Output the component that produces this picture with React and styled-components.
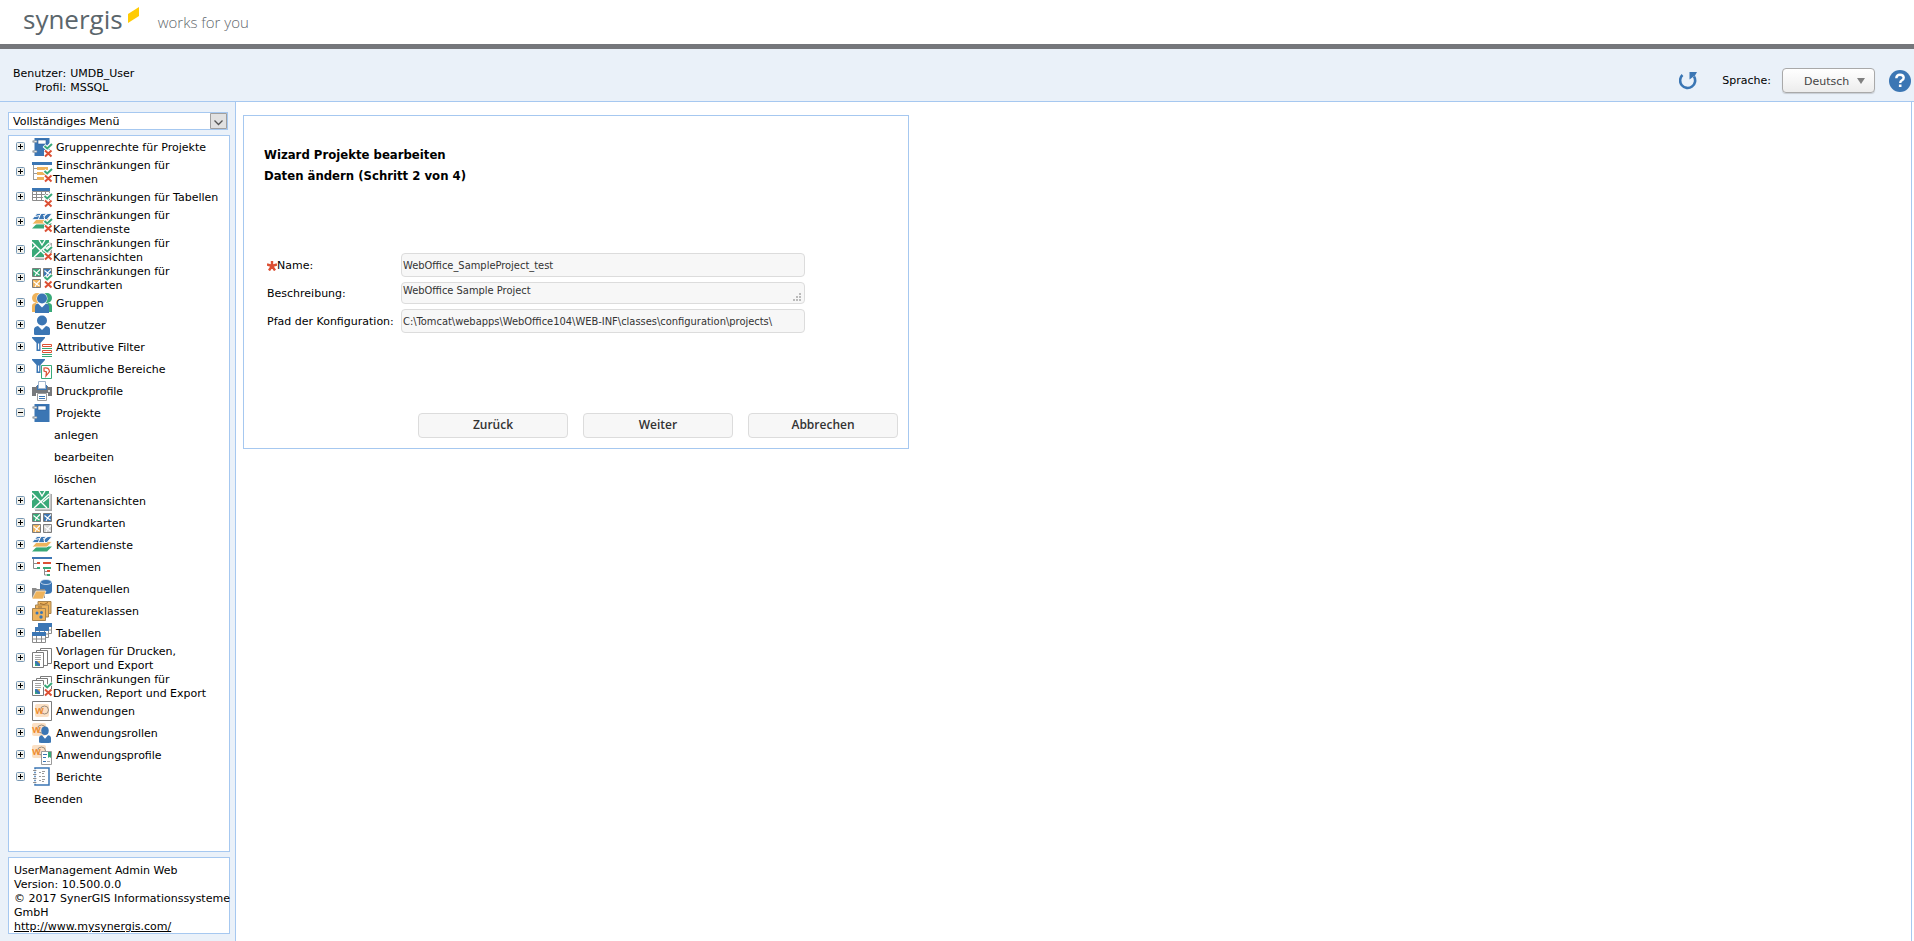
import React, { useState } from 'react';
import styled, { createGlobalStyle } from 'styled-components';

const COLORS = {
  LINE: '#a6c8f0',
  PANEL: '#eaf1f9',
  BAR: '#75777b',
  BLUE: '#3b76b4',
  GREEN: '#38a978',
  ORANGE: '#eeb35c',
  RED: '#dc5034',
  GREY: '#7b7b7b',
  FIELD: '#f7f7f7',
  FIELD_LINE: '#dcdcdc'
};

const FONT = '"DejaVu Sans", Verdana, sans-serif';
const FONT_NARROW = '"DejaVu Sans Condensed", "DejaVu Sans", sans-serif';
const FONT_HUMANIST = '"Open Sans", "Noto Sans", sans-serif';

const GlobalStyle = createGlobalStyle`
  * {
    box-sizing: border-box;
  }
  body {
    margin: 0;
    background: #fff;
    color: #000;
    font-family: ${FONT};
    font-size: 11px;
    line-height: 14px;
  }
`;

const Page = styled.div`
  display: flex;
  flex-direction: column;
  min-height: 100vh;
`;

const Brand = styled.header`
  display: flex;
  align-items: flex-start;
  height: 49px;
  padding-left: 23px;
  border-bottom: 5px solid ${COLORS.BAR};
`;

const BrandName = styled.span`
  font-family: ${FONT_HUMANIST};
  font-size: 26px;
  line-height: 38px;
  color: #5b666c;
`;

const BrandMark = styled.svg`
  width: 12px;
  height: 17px;
  margin: 7px 18px 0 5px;
`;

const Slogan = styled.span`
  font-family: ${FONT_HUMANIST};
  font-size: 15px;
  font-weight: 300;
  line-height: 45px;
  color: #5f686d;
`;

const Toolbar = styled.div`
  display: flex;
  align-items: center;
  justify-content: space-between;
  height: 53px;
  padding: 15px 3px 4px 13px;
  background: ${COLORS.PANEL};
  border-bottom: 1px solid ${COLORS.LINE};
`;

const Session = styled.dl`
  display: grid;
  grid-template-columns: max-content max-content;
  column-gap: 4px;
  margin: 0;

  dt {
    text-align: right;
  }
  dd {
    margin: 0;
  }
`;

const Tools = styled.div`
  display: flex;
  align-items: center;
`;

const IconButton = styled.button`
  display: block;
  padding: 0;
  border: 0;
  background: none;
  cursor: pointer;

  svg {
    display: block;
  }
`;

const LanguageLabel = styled.label`
  margin: 0 11px 0 24px;
`;

const LanguageBox = styled.span`
  position: relative;
  display: block;
  margin-right: 14px;

  svg {
    position: absolute;
    top: 10px;
    right: 10px;
    pointer-events: none;
  }
`;

const LanguageSelect = styled.select`
  display: block;
  width: 93px;
  height: 25px;
  padding: 1px 16px 0 21px;
  appearance: none;
  border: 1px solid #a9a9a9;
  border-radius: 4px;
  background: linear-gradient(#fff, #f6f6f6 50%, #ececec);
  box-shadow: 0 1px 1px rgba(0, 0, 0, 0.15);
  font-family: ${FONT};
  font-size: 11px;
  color: #444;
`;

const Body = styled.div`
  display: flex;
  flex: 1;
`;

const Sidebar = styled.aside`
  display: flex;
  flex-direction: column;
  flex: none;
  width: 236px;
  padding: 10px 5px 7px 8px;
  background: ${COLORS.PANEL};
  border-right: 1px solid ${COLORS.LINE};
`;

const MenuBox = styled.div`
  position: relative;
  margin: 0 2px 5px 0;

  svg {
    position: absolute;
    top: 1px;
    right: 1px;
    pointer-events: none;
  }
`;

const MenuSelect = styled.select`
  display: block;
  width: 100%;
  height: 18px;
  padding: 0 20px 0 4px;
  appearance: none;
  border: 1px solid ${COLORS.LINE};
  border-radius: 0;
  background: #fff;
  font-family: ${FONT};
  font-size: 11px;
  color: #000;
`;

const Tree = styled.ul`
  flex: 1;
  margin: 0 0 5px;
  padding: 0;
  list-style: none;
  background: #fff;
  border: 1px solid ${COLORS.LINE};
`;

const Row = styled.li`
  display: flex;
  align-items: center;
  min-height: 22px;
  padding-left: ${({ $indent }) => $indent || 7}px;

  a {
    margin: 1px 0 -1px;
    color: inherit;
    text-decoration: none;
  }
`;

const Toggle = styled(IconButton)`
  flex: none;
  margin-right: 7px;
`;

const RowIcon = styled.svg`
  flex: none;
  width: 20px;
  height: 20px;
  margin-right: 1px;
  overflow: visible;
`;

const RowLink = styled.a`
  text-indent: 3px;
  white-space: pre-line;
`;

const About = styled.footer`
  height: 77px;
  padding: 6px 0 0 5px;
  background: #fff;
  border: 1px solid ${COLORS.LINE};
  white-space: nowrap;

  a {
    color: inherit;
  }
`;

const Content = styled.main`
  flex: 1;
  min-width: 0;
  margin-right: 2px;
  padding: 13px 7px;
  border-right: 1px solid ${COLORS.LINE};
`;

const Wizard = styled.form`
  width: 666px;
  max-width: 100%;
  padding: 28px 10px 10px 20px;
  border: 1px solid ${COLORS.LINE};
`;

const Title = styled.h1`
  margin: 0;
  font-family: ${FONT_NARROW};
  font-size: 13px;
  font-weight: bold;
  line-height: 21px;
`;

const Fields = styled.div`
  display: grid;
  grid-template-columns: 134px minmax(0, 404px);
  row-gap: 5px;
  align-items: center;
  margin: 67px 0 80px 3px;
`;

const FieldLabel = styled.label`
  display: flex;
  align-items: center;
  padding-top: 2px;
`;

const Input = styled.input`
  width: 100%;
  height: 24px;
  padding: 0 1px;
  border: 1px solid ${COLORS.FIELD_LINE};
  border-radius: 4px;
  background: ${COLORS.FIELD};
  font-family: ${FONT_NARROW};
  font-size: 11px;
  color: #333;
`;

const AreaBox = styled.div`
  position: relative;

  svg {
    position: absolute;
    right: 4px;
    bottom: 3px;
    pointer-events: none;
  }
`;

const Area = styled.textarea`
  display: block;
  width: 100%;
  height: 22px;
  padding: 1px;
  border: 1px solid ${COLORS.FIELD_LINE};
  border-radius: 4px;
  background: ${COLORS.FIELD};
  font-family: ${FONT_NARROW};
  font-size: 11px;
  line-height: 14px;
  color: #333;
  resize: none;
  overflow: hidden;
`;

const Actions = styled.div`
  display: flex;
  justify-content: flex-end;
  gap: 15px;
`;

const Button = styled.button`
  width: 150px;
  height: 25px;
  padding: 0 0 2px;
  border: 1px solid ${COLORS.FIELD_LINE};
  border-radius: 4px;
  background: ${COLORS.FIELD};
  font-family: ${FONT_HUMANIST};
  font-size: 12px;
  font-weight: 600;
  color: #333;
  cursor: pointer;
`;

const Limits = () => (
  <>
    <path d="M12 8.5l3 3 5-5" fill="none" stroke="#fff" strokeWidth="4" />
    <path d="M12 13h8v7h-8z" fill="#fff" />
    <path d="M12.500 9l2.700 2.500L20 7" fill="none" stroke={COLORS.GREEN} strokeWidth="2" />
    <path d="M13 13.500l6.500 6M19.500 13.500l-6.500 6" stroke={COLORS.RED} strokeWidth="2" />
  </>
);

const Book = () => (
  <>
    <path d="M2.500 1h15v18h-15z" fill={COLORS.BLUE} />
    <path d="M6 3h8v4H6z" fill="#fff" stroke="#2c5f98" strokeWidth="0.6" />
    <path d="M1.500 4.500h2.500M1.500 14.500h2.500" stroke="#9aa3ab" strokeWidth="2.500" strokeLinecap="round" />
    <path d="M2.500 4.500h2M2.500 14.500h2" stroke="#e5e8ea" strokeWidth="1" />
  </>
);

const Layers = () => (
  <>
    <path d="M5 11.500h15l-5 5H0z" fill={COLORS.GREEN} />
    <path d="M5 6.500h15l-5 5.500H0z" fill={COLORS.ORANGE} stroke="#fff" strokeWidth="0.800" />
    <path d="M5 1.500h15l-5 6H0z" fill={COLORS.BLUE} stroke="#fff" strokeWidth="0.800" />
    <path d="M9.500 1L8 3.500 6 8M15 1l-3 4 1 3M3 4.500l5-1M11 4l6-3" fill="none" stroke="#fff" />
  </>
);

const MapView = () => (
  <>
    <path d="M3 3h17v17H3z" fill="#a8a8a8" />
    <path d="M2 2h16.500v16.500H2z" fill="#e4e4e4" />
    <path d="M0 0h17v17H0z" fill={COLORS.GREEN} />
    <path d="M0 2l15 15M2 17L17 3M7 0l3 5 3-5M11 11l6-5M4 5L0 9" fill="none" stroke="#fff" strokeWidth="1.400" />
  </>
);

const MapTile = ({ x, y, color }) => (
  <g transform={`translate(${x} ${y})`}>
    <path d="M.5.5h8v8h-8z" fill={color} stroke={COLORS.GREY} />
    <path d="M1.500 2.500l3 2.500L8 1.500M3 8l1.500-3 3 2" fill="none" stroke="#fff" strokeWidth="1.100" />
  </g>
);

const MapTiles = () => (
  <>
    <MapTile x={0} y={0} color={COLORS.GREEN} />
    <MapTile x={11} y={0} color={COLORS.BLUE} />
    <MapTile x={0} y={11} color={COLORS.ORANGE} />
    <MapTile x={11} y={11} color="#d3d3d3" />
  </>
);

const Funnel = () => (
  <path d="M0 0h13v1L8.500 6v8h-4V6L0 1zM6 6.500v6h1.200v-6z" fill={COLORS.BLUE} fillRule="evenodd" />
);

const Person = ({ color = COLORS.BLUE, ...rest }) => (
  <g fill={color} {...rest}>
    <circle cx="10" cy="5.500" r="5" />
    <path d="M2 19.500v-5q0-3 4-3.500l4 4 4-4q4 .5 4 3.500v5q-1 .5-3 .5H5q-2 0-3-.5z" />
  </g>
);

const Pages = () => (
  <g fill="#fff" stroke={COLORS.GREY}>
    <path d="M8.500.5h11v15h-11z" />
    <path d="M4.500 2.500h11v15h-11z" />
    <path d="M.5 4.500h11v15H.5z" />
    <path d="M3 7.500h6M3 9.500h6M3 11.500h6" stroke="#a5a5a5" />
    <path d="M3 13h5v5H3z" fill={COLORS.BLUE} stroke="none" />
    <path d="M5 13h3v3z" fill={COLORS.ORANGE} stroke="none" />
    <path d="M3 15l3 3H3z" fill={COLORS.GREEN} stroke="none" />
  </g>
);

const AppMark = () => (
  <>
    <rect width="14" height="13" rx="2" fill="#fbe0c4" />
    <circle cx="9.500" cy="6" r="4" fill="none" stroke="#9a8b7c" />
    <text x="0" y="10" fontFamily="Lato, sans-serif" fontSize="11" fontWeight="bold" fill="#ef8d2f">
      w
    </text>
  </>
);

const MiniTable = ({ x, y }) => (
  <g transform={`translate(${x} ${y})`}>
    <path d="M0 0h14v11H0z" fill="#fff" />
    <path d="M.5 3.500h13v7H.5zM4.500 3v8M9.500 3v8M0 7h14" fill="none" stroke="#8b8b8b" />
    <path d="M0 0h14v4H0z" fill={COLORS.BLUE} />
  </g>
);

const Card = ({ x, y }) => (
  <path d={`M${x} ${y}h13v12h-13z`} fill={COLORS.ORANGE} stroke="#a98550" />
);

const ICONS = {
  projectLimits: (
    <>
      <Book />
      <Limits />
    </>
  ),
  themeLimits: (
    <>
      <path d="M0 0h20v3H0z" fill={COLORS.BLUE} />
      <path d="M1.500 3v15M1 6.500h15M1 11.500h15M1 17.500h15" stroke="#9b9b9b" fill="none" />
      <path d="M5 5h11v3H5zM5 10h9v3H5zM5 15h8v3H5z" fill={COLORS.ORANGE} />
      <Limits />
    </>
  ),
  tableLimits: (
    <>
      <path d="M.5 4.500h17v9H.5zM4.500 4v10M9.500 4v10M13.500 4v10M0 7.500h18M0 10.500h18" fill="none" stroke="#8b8b8b" />
      <path d="M0 1h18v3H0z" fill={COLORS.BLUE} />
      <Limits />
    </>
  ),
  serviceLimits: (
    <>
      <Layers />
      <Limits />
    </>
  ),
  viewLimits: (
    <>
      <MapView />
      <Limits />
    </>
  ),
  basemapLimits: (
    <>
      <MapTiles />
      <path d="M10.500 10h10v10.500h-10z" fill="#fff" />
      <Limits />
    </>
  ),
  groups: (
    <>
      <circle cx="5" cy="5" r="5" fill={COLORS.ORANGE} />
      <circle cx="15" cy="5" r="5" fill={COLORS.GREEN} />
      <path d="M0 19v-6q0-3 4-3l5 6v3z" fill={COLORS.ORANGE} />
      <path d="M20 19v-6q0-3-4-3l-5 6v3z" fill={COLORS.GREEN} />
      <circle cx="10" cy="5.500" r="5.500" fill="#fff" />
      <circle cx="10" cy="5.500" r="5" fill={COLORS.BLUE} />
      <path d="M3 20v-6q0-3 3-3.500l4 4 4-4q3 .5 3 3.500v6z" fill={COLORS.BLUE} />
    </>
  ),
  user: <Person />,
  attributeFilter: (
    <>
      <Funnel />
      <path d="M10.500 7.500h9v2h-9zM10.500 13.500h9v2h-9z" fill="#fff" stroke={COLORS.RED} />
      <path d="M10 11.500h10M10 17.500h10M10 19.500h10" stroke={COLORS.GREEN} />
    </>
  ),
  spatialFilter: (
    <>
      <Funnel />
      <path d="M9.500 6.500h10v13h-10z" fill="#fff" stroke={COLORS.GREEN} />
      <path d="M12 9q5-1 5.500 3.500L14 17l.500-4-2.500-1z" fill="none" stroke={COLORS.RED} strokeWidth="1.200" />
    </>
  ),
  printer: (
    <>
      <path d="M0 6h4V5h12v1h4v9h-4v-3H4v3H0z" fill="#77797c" />
      <path d="M5 4h10v5H5z" fill={COLORS.BLUE} />
      <path d="M6.500.5h7v7h-7z" fill="#fff" stroke="#9fb4cc" />
      <path d="M5.500 12.500h9v7h-9z" fill="#fff" stroke="#9b9b9b" />
      <path d="M7 15.500h6M7 17.500h6" stroke={COLORS.BLUE} />
      <path d="M16 9h2v2h-2z" fill="#ddd" />
    </>
  ),
  project: <Book />,
  view: <MapView />,
  basemap: <MapTiles />,
  service: <Layers />,
  theme: (
    <>
      <path d="M0 0h20v2H0z" fill={COLORS.BLUE} />
      <path d="M1.500 2v9.500H6M1.500 6.500H6M12.500 12v6H16M12.500 14.500H16" fill="none" stroke="#8b8b8b" />
      <path d="M5 5h3v2H5zM11 5h8v2h-8zM15 13h3v2h-3z" fill={COLORS.RED} />
      <path d="M5 10h3v2H5zM11 10h8v2h-8zM15 17h3v2h-3z" fill={COLORS.GREEN} />
    </>
  ),
  source: (
    <>
      <path d="M8 3v9q0 3 6 3t6-3V3z" fill={COLORS.BLUE} />
      <ellipse cx="14" cy="3" rx="5.500" ry="2.500" fill={COLORS.BLUE} stroke="#dbe7f4" strokeWidth="0.800" />
      <path d="M0 9h4l1 1h8v9H0z" fill="#8a8a8a" />
      <path d="M4 12h10l-3 8H0z" fill={COLORS.ORANGE} stroke="#fff" strokeWidth="0.600" />
    </>
  ),
  feature: (
    <>
      <Card x={6} y={0.5} />
      <Card x={3.5} y={4} />
      <Card x={0.5} y={7.5} />
      <path d="M8 2.500l4 1 4-2M6 6h4" fill="none" stroke="#a06c2e" />
      <circle cx="5" cy="12" r="1.500" fill={COLORS.BLUE} />
      <circle cx="9.500" cy="11.500" r="1.500" fill={COLORS.BLUE} />
      <circle cx="9" cy="16" r="1.700" fill={COLORS.BLUE} />
    </>
  ),
  table: (
    <>
      <MiniTable x={6} y={0} />
      <MiniTable x={3} y={4} />
      <MiniTable x={0} y={9} />
    </>
  ),
  template: <Pages />,
  templateLimits: (
    <>
      <Pages />
      <Limits />
    </>
  ),
  app: (
    <>
      <path d="M.5.5h19v19H.5z" fill="#fff" stroke={COLORS.GREY} />
      <g transform="translate(3 3)">
        <AppMark />
      </g>
    </>
  ),
  role: (
    <>
      <AppMark />
      <Person transform="translate(5.500 3) scale(.75 .85)" />
    </>
  ),
  profile: (
    <>
      <AppMark />
      <path d="M9.500 6.500h10v13h-10z" fill="#fff" stroke="#9b9b9b" />
      <path d="M16 7h3v6l-1.500-1L16 13z" fill={COLORS.GREEN} />
      <path d="M11 9.500h4M11 12.500h3M11 16.500h3" stroke={COLORS.BLUE} />
      <path d="M15 16.500h3" stroke="#aaa" />
    </>
  ),
  report: (
    <>
      <path d="M3 1h14v17H3z" fill="#fff" stroke={COLORS.BLUE} strokeWidth="1.500" />
      <path d="M7 5.500h2M7 9.500h2M7 13.500h2M10 4.500h3M10 6.500h2M10 9.500h3M10 12.500h3M10 14.500h2" stroke="#9b9b9b" />
      <path d="M1.500 3.500h3M1.500 7.500h3M1.500 11.500h3M1.500 15.500h3" stroke="#fff" strokeWidth="2.500" />
      <path d="M1.500 3.500h2.500M1.500 7.500h2.500M1.500 11.500h2.500M1.500 15.500h2.500" stroke="#8b8b8b" strokeLinecap="round" />
    </>
  )
};

const MENU = [
  { icon: 'projectLimits', text: 'Gruppenrechte für Projekte' },
  { icon: 'themeLimits', text: 'Einschränkungen für\nThemen' },
  { icon: 'tableLimits', text: 'Einschränkungen für Tabellen' },
  { icon: 'serviceLimits', text: 'Einschränkungen für\nKartendienste' },
  { icon: 'viewLimits', text: 'Einschränkungen für\nKartenansichten' },
  { icon: 'basemapLimits', text: 'Einschränkungen für\nGrundkarten' },
  { icon: 'groups', text: 'Gruppen' },
  { icon: 'user', text: 'Benutzer' },
  { icon: 'attributeFilter', text: 'Attributive Filter' },
  { icon: 'spatialFilter', text: 'Räumliche Bereiche' },
  { icon: 'printer', text: 'Druckprofile' },
  { icon: 'project', text: 'Projekte', children: ['anlegen', 'bearbeiten', 'löschen'] },
  { icon: 'view', text: 'Kartenansichten' },
  { icon: 'basemap', text: 'Grundkarten' },
  { icon: 'service', text: 'Kartendienste' },
  { icon: 'theme', text: 'Themen' },
  { icon: 'source', text: 'Datenquellen' },
  { icon: 'feature', text: 'Featureklassen' },
  { icon: 'table', text: 'Tabellen' },
  { icon: 'template', text: 'Vorlagen für Drucken,\nReport und Export' },
  { icon: 'templateLimits', text: 'Einschränkungen für\nDrucken, Report und Export' },
  { icon: 'app', text: 'Anwendungen' },
  { icon: 'role', text: 'Anwendungsrollen' },
  { icon: 'profile', text: 'Anwendungsprofile' },
  { icon: 'report', text: 'Berichte' }
];

const ToggleIcon = ({ open }) => (
  <svg width="9" height="10" viewBox="0 0 9 10" aria-hidden="true">
    <rect x=".5" y=".5" width="8" height="8" rx="1" fill="#f1f1ec" stroke="#7898b5" />
    <path d={open ? 'M2 4.5h5' : 'M2 4.5h5M4.5 2v5'} stroke="#000" />
  </svg>
);

const MenuItem = ({ item }) => {
  const [open, setOpen] = useState(Boolean(item.children));

  return (
    <>
      <Row>
        <Toggle type="button" aria-label={item.text} aria-expanded={open} onClick={() => setOpen(!open)}>
          <ToggleIcon open={open} />
        </Toggle>
        <RowIcon viewBox="0 0 20 20" aria-hidden="true">
          {ICONS[item.icon]}
        </RowIcon>
        <RowLink href="#">{item.text}</RowLink>
      </Row>
      {open &&
        item.children &&
        item.children.map(child => (
          <Row key={child} $indent={45}>
            <a href="#">{child}</a>
          </Row>
        ))}
    </>
  );
};

const App = () => (
  <>
    <GlobalStyle />
    <Page>
      <Brand>
        <BrandName>synergis</BrandName>
        <BrandMark viewBox="0 0 12 17" aria-hidden="true">
          <path d="M0 7L11 0v9L0 16z" fill="#ffcb05" />
        </BrandMark>
        <Slogan>works for you</Slogan>
      </Brand>
      <Toolbar>
        <Session>
          <dt>Benutzer:</dt>
          <dd>UMDB_User</dd>
          <dt>Profil:</dt>
          <dd>MSSQL</dd>
        </Session>
        <Tools>
          <IconButton type="button" aria-label="Neu laden">
            <svg width="19" height="18" viewBox="0 0 19 18">
              <path d="M3.500 3A7.500 7.500 0 1 0 15 4.500" fill="none" stroke={COLORS.BLUE} strokeWidth="2.600" />
              <path d="M10.500 0H18l-2 3.500-5.500 4z" fill={COLORS.BLUE} />
            </svg>
          </IconButton>
          <LanguageLabel htmlFor="language">Sprache:</LanguageLabel>
          <LanguageBox>
            <LanguageSelect id="language">
              <option>Deutsch</option>
            </LanguageSelect>
            <svg width="8" height="6" viewBox="0 0 8 6" aria-hidden="true">
              <path d="M0 0h8L4 6z" fill="#808080" />
            </svg>
          </LanguageBox>
          <IconButton type="button" aria-label="Hilfe">
            <svg width="22" height="22" viewBox="0 0 22 22">
              <circle cx="11" cy="11" r="11" fill={COLORS.BLUE} />
              <path
                d="M7.300 8.200q.2-3.500 3.700-3.500t3.700 3q0 1.600-1.700 2.600T11.200 13"
                fill="none"
                stroke="#fff"
                strokeWidth="2.400"
              />
              <path d="M9.900 14.500h2.600V17H9.900z" fill="#fff" />
            </svg>
          </IconButton>
        </Tools>
      </Toolbar>
      <Body>
        <Sidebar>
          <MenuBox>
            <MenuSelect aria-label="Menü">
              <option>Vollständiges Menü</option>
            </MenuSelect>
            <svg width="17" height="16" viewBox="0 0 17 16" aria-hidden="true">
              <path d="M.5.5h16v15H.5z" fill="#e1e1e1" stroke="#9f9f9f" />
              <path d="M4.500 7.500l4 4 4-4" fill="none" stroke="#555" strokeWidth="1.300" />
            </svg>
          </MenuBox>
          <Tree>
            {MENU.map(item => (
              <MenuItem key={item.icon} item={item} />
            ))}
            <Row $indent={25}>
              <a href="#">Beenden</a>
            </Row>
          </Tree>
          <About>
            UserManagement Admin Web
            <br />
            Version: 10.500.0.0
            <br />© 2017 SynerGIS Informationssysteme
            <br />
            GmbH
            <br />
            <a href="http://www.mysynergis.com/">http://www.mysynergis.com/</a>
          </About>
        </Sidebar>
        <Content>
          <Wizard onSubmit={event => event.preventDefault()}>
            <Title>
              Wizard Projekte bearbeiten
              <br />
              Daten ändern (Schritt 2 von 4)
            </Title>
            <Fields>
              <FieldLabel htmlFor="name">
                <svg width="10" height="10" viewBox="0 0 10 10" aria-hidden="true">
                  <path
                    d="M5 0v5M0 3.500L5 5l5-1.500M2 9.500L5 5l3 4.500"
                    fill="none"
                    stroke={COLORS.RED}
                    strokeWidth="2.400"
                  />
                </svg>
                Name:
              </FieldLabel>
              <Input id="name" type="text" defaultValue="WebOffice_SampleProject_test" />
              <FieldLabel htmlFor="description">Beschreibung:</FieldLabel>
              <AreaBox>
                <Area id="description" rows={1} defaultValue="WebOffice Sample Project" />
                <svg width="8" height="8" viewBox="0 0 8 8" aria-hidden="true">
                  <path
                    d="M6 0h2v2H6zM3 3h2v2H3zM6 3h2v2H6zM0 6h2v2H0zM3 6h2v2H3zM6 6h2v2H6z"
                    fill="#bbb"
                  />
                </svg>
              </AreaBox>
              <FieldLabel htmlFor="path">Pfad der Konfiguration:</FieldLabel>
              <Input
                id="path"
                type="text"
                defaultValue="C:\Tomcat\webapps\WebOffice104\WEB-INF\classes\configuration\projects\"
              />
            </Fields>
            <Actions>
              <Button type="button">Zurück</Button>
              <Button type="submit">Weiter</Button>
              <Button type="button">Abbrechen</Button>
            </Actions>
          </Wizard>
        </Content>
      </Body>
    </Page>
  </>
);

export default App;
